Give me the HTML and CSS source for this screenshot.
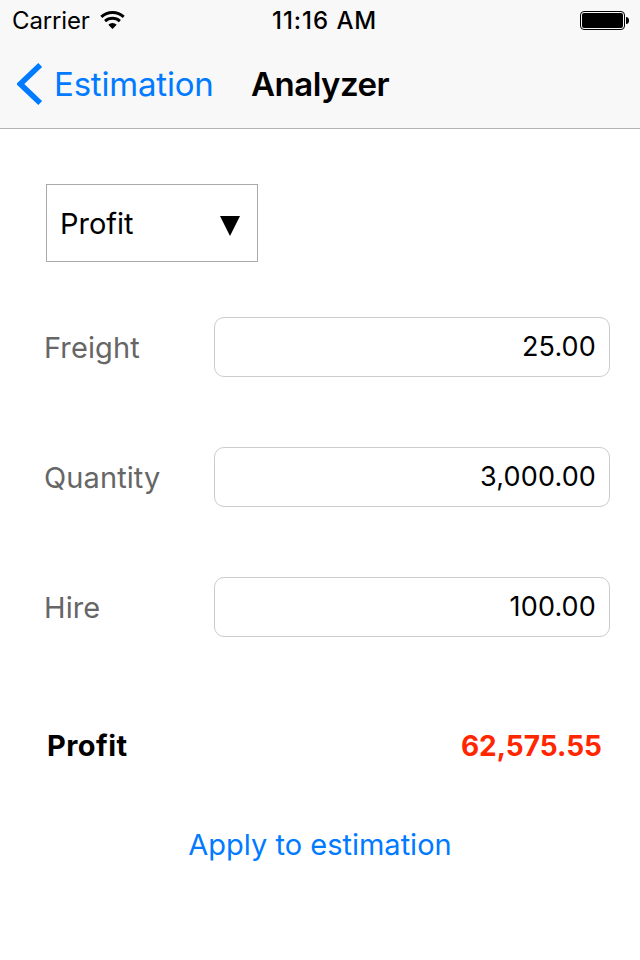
FILE: index.html
```html
<!DOCTYPE html>
<html lang="en">
<head>
<meta charset="utf-8">
<title>Analyzer</title>
<link rel="stylesheet" href="styles.css">
</head>
<body>
<header class="top">
  <div class="status">
    <div class="carrier"><span class="carrier-name">Carrier</span>
      <svg class="wifi" width="25" height="19" viewBox="0 0 25 19"><path d="M1.300 5.900a16.500 16.500 0 0 1 22.400 0M5.100 10.100a11 11 0 0 1 14.800 0" fill="none" stroke="#000" stroke-width="2.900"/><path d="M12.500 18L8.300 13.700a6.300 6.300 0 0 1 8.400 0z"/></svg>
    </div>
    <span class="clock">11:16 AM</span>
    <svg class="battery" width="49" height="19" viewBox="0 0 49 19"><rect x=".5" y=".5" width="44" height="18" rx="3.5" fill="none" stroke="#000"/><rect x="2" y="2" width="41" height="15" rx="2"/><path d="M46 6a3 3.500 0 0 1 0 7z"/></svg>
  </div>
  <nav class="nav">
    <a class="back"><svg width="26" height="42" viewBox="0 0 26 42"><path d="M23.200 2L3.300 21l19.900 19" fill="none" stroke="#007aff" stroke-width="5.500"/></svg><span class="back-label">Estimation</span></a>
    <h1 class="title">Analyzer</h1>
  </nav>
</header>
<main class="form">
  <div class="select"><span class="select-label">Profit</span><svg class="arrow" width="20" height="20" viewBox="0 0 20 20"><path d="M0 0h20L10 20z"/></svg></div>
  <div class="row"><label class="label">Freight</label><div class="field">25.00</div></div>
  <div class="row"><label class="label">Quantity</label><div class="field">3,000.00</div></div>
  <div class="row"><label class="label">Hire</label><div class="field">100.00</div></div>
  <div class="result"><span class="result-label">Profit</span><span class="result-value">62,575.55</span></div>
  <a class="apply">Apply to estimation</a>
</main>
</body>
</html>
```
FILE: styles.css
```css
* { box-sizing: border-box; }
body { margin: 0; width: 640px; height: 960px; background: #fff; color: #000; font-family: Inter, "Liberation Sans", sans-serif; overflow: hidden; }
svg { display: block; flex: none; }
span, a, h1, label { white-space: nowrap; }
.top { height: 129px; background: #f8f8f8; border-bottom: 1px solid #b2b2b2; }
.status { height: 40px; display: grid; grid-template-columns: 260px 1fr auto; align-items: center; padding: 1px 11px 0 12px; font-size: 24px; }
.carrier { display: flex; align-items: center; gap: 10.5px; }
.carrier-name { letter-spacing: -0.15px; }
.clock { font-weight: 500; letter-spacing: 0.95px; }
.nav { height: 88px; display: flex; align-items: center; padding-left: 17px; font-size: 33px; }
.back { display: flex; align-items: center; gap: 11px; color: #007aff; width: 234px; }
.back-label { letter-spacing: -0.2px; }
.title { margin: 0; font-size: 33px; font-weight: 600; letter-spacing: -0.5px; }
.form { padding: 55px 30px 0 44px; font-size: 29px; }
.select { width: 212px; height: 78px; margin: 0 0 55px 2px; padding: 0 17px 0 13px; border: 1px solid #aaa; display: flex; align-items: center; justify-content: space-between; }
.arrow { margin-top: 6px; }
.row { display: flex; align-items: center; height: 60px; margin-bottom: 70px; }
.label { width: 170px; color: #666; letter-spacing: 0.1px; }
.field { flex: 1; height: 60px; border: 1px solid #ccc; border-radius: 10px; display: flex; align-items: center; justify-content: flex-end; padding: 0 13px 2px 0; font-size: 27px; letter-spacing: 0.15px; }
.result { display: flex; justify-content: space-between; align-items: center; height: 60px; margin-top: 78px; padding: 0 8px 0 3px; font-weight: 700; font-size: 28px; }
.result-label { font-size: 29px; letter-spacing: 0.45px; }
.result-value { color: #ff2600; padding-top: 2px; }
.apply { display: flex; justify-content: center; align-items: center; margin: 39px -30px 0 -44px; height: 60px; color: #007aff; }
```
